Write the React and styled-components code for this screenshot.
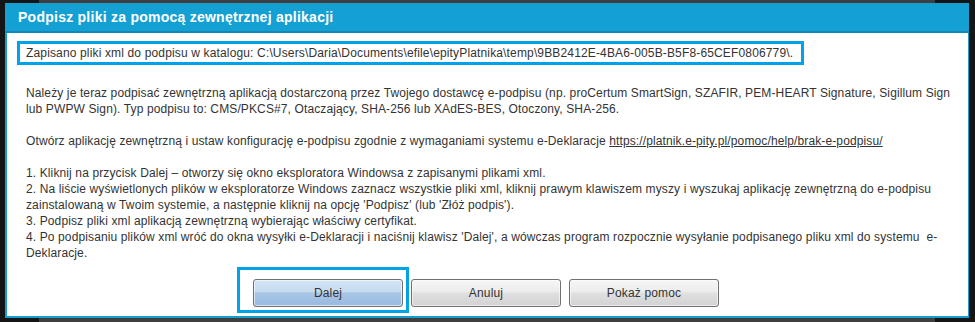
import React from "react";
import styled, { createGlobalStyle } from "styled-components";

const Global = createGlobalStyle`
  html, body { margin: 0; padding: 0; background: #151515; }
  body { font-family: "Liberation Sans", Arial, sans-serif; }
`;

const Screen = styled.div`
  position: relative;
  width: 975px;
  height: 322px;
  box-sizing: border-box;
  padding: 3px 6px 4px 5px;
  background: #151515;
  overflow: hidden;
`;

const BackWindow = styled.div`
  position: absolute;
  left: 39px;
  right: 40px;
  top: 0;
  bottom: 0;
  background: #3f3f3f;
`;

const Dialog = styled.div`
  position: relative;
  z-index: 1;
  height: 100%;
  box-sizing: border-box;
  display: flex;
  flex-direction: column;
  background: #ffffff;
  border-left: 2px solid #149fd3;
  border-right: 1px solid #149fd3;
  border-bottom: 2px solid #149fd3;
`;

const TitleBar = styled.div`
  height: 28px;
  margin-left: -2px;
  margin-right: -1px;
  padding-left: 13px;
  display: flex;
  align-items: center;
  background: #14a0d3;
  border-bottom: 2px solid #0f88b8;
  color: #ffffff;
  font-weight: bold;
  font-size: 14px;
  letter-spacing: 0.25px;
`;

const Body = styled.div`
  flex: 1;
  display: flex;
  flex-direction: column;
  padding: 8px 13px 0 10px;
  color: #333333;
  font-size: 12px;
  line-height: 16px;
`;

const PathBox = styled.div`
  align-self: flex-start;
  border: 3px solid #00a2e8;
  padding: 1px 8px 0 6px;
  height: 17px;
  line-height: 16px;
  white-space: nowrap;
  letter-spacing: 0.15px;
`;

const Text = styled.div`
  margin-top: 20px;
  padding-left: 9px;
  white-space: nowrap;
  letter-spacing: 0.12px;
`;

const Para = styled.p`
  margin: 0 0 16px 0;
  &:last-child { margin-bottom: 0; }
`;

const Link = styled.a`
  color: #333333;
  text-decoration: underline;
`;

const ButtonRow = styled.div`
  display: flex;
  justify-content: center;
  gap: 8px;
  margin-top: 18px;
`;

const FocusWrap = styled.div`
  position: relative;
  display: flex;
  &::after {
    content: "";
    position: absolute;
    top: -12px;
    left: -16px;
    right: -6px;
    bottom: -6px;
    border: 3px solid #00a2e8;
    pointer-events: none;
  }
`;

const Button = styled.button`
  width: 150px;
  height: 28px;
  box-sizing: border-box;
  border: 1px solid #707070;
  border-radius: 3px;
  font-family: "Liberation Sans", Arial, sans-serif;
  font-size: 12px;
  letter-spacing: 0.15px;
  color: #333333;
  padding: 0;
  background: ${(p) =>
    p.$primary
      ? "linear-gradient(to bottom, #d3e4f5 0%, #c7dbf0 45%, #a9c6e6 50%, #97b9df 100%)"
      : "linear-gradient(to bottom, #f6f6f6 0%, #ececec 45%, #e0e0e0 50%, #d2d2d2 100%)"};
  box-shadow: inset 0 0 0 1px rgba(255, 255, 255, 0.6);
`;

export default function App() {
  return (
    <>
      <Global />
      <Screen>
        <BackWindow />
        <Dialog>
          <TitleBar>Podpisz pliki za pomocą zewnętrznej aplikacji</TitleBar>
          <Body>
            <PathBox>
              Zapisano pliki xml do podpisu w katalogu: C:\Users\Daria\Documents\efile\epityPlatnika\temp\9BB2412E-4BA6-005B-B5F8-65CEF0806779\.
            </PathBox>
            <Text>
              <Para>
                Należy je teraz podpisać zewnętrzną aplikacją dostarczoną przez Twojego dostawcę e-podpisu (np. proCertum SmartSign, SZAFIR, PEM-HEART Signature, Sigillum Sign
                <br />
                lub PWPW Sign). Typ podpisu to: CMS/PKCS#7, Otaczający, SHA-256 lub XAdES-BES, Otoczony, SHA-256.
              </Para>
              <Para>
                Otwórz aplikację zewnętrzną i ustaw konfigurację e-podpisu zgodnie z wymaganiami systemu e-Deklaracje{" "}
                <Link href="#">https://platnik.e-pity.pl/pomoc/help/brak-e-podpisu/</Link>
              </Para>
              <Para>
                1. Kliknij na przycisk Dalej – otworzy się okno eksploratora Windowsa z zapisanymi plikami xml.
                <br />
                2. Na liście wyświetlonych plików w eksploratorze Windows zaznacz wszystkie pliki xml, kliknij prawym klawiszem myszy i wyszukaj aplikację zewnętrzną do e-podpisu
                <br />
                zainstalowaną w Twoim systemie, a następnie kliknij na opcję 'Podpisz' (lub 'Złóż podpis').
                <br />
                3. Podpisz pliki xml aplikacją zewnętrzną wybierając właściwy certyfikat.
                <br />
                4. Po podpisaniu plików xml wróć do okna wysyłki e-Deklaracji i naciśnij klawisz 'Dalej', a wówczas program rozpocznie wysyłanie podpisanego pliku xml do systemu{"\u00a0\u00a0"}e-
                <br />
                Deklaracje.
              </Para>
            </Text>
            <ButtonRow>
              <FocusWrap>
                <Button $primary>Dalej</Button>
              </FocusWrap>
              <Button>Anuluj</Button>
              <Button>Pokaż pomoc</Button>
            </ButtonRow>
          </Body>
        </Dialog>
      </Screen>
    </>
  );
}
